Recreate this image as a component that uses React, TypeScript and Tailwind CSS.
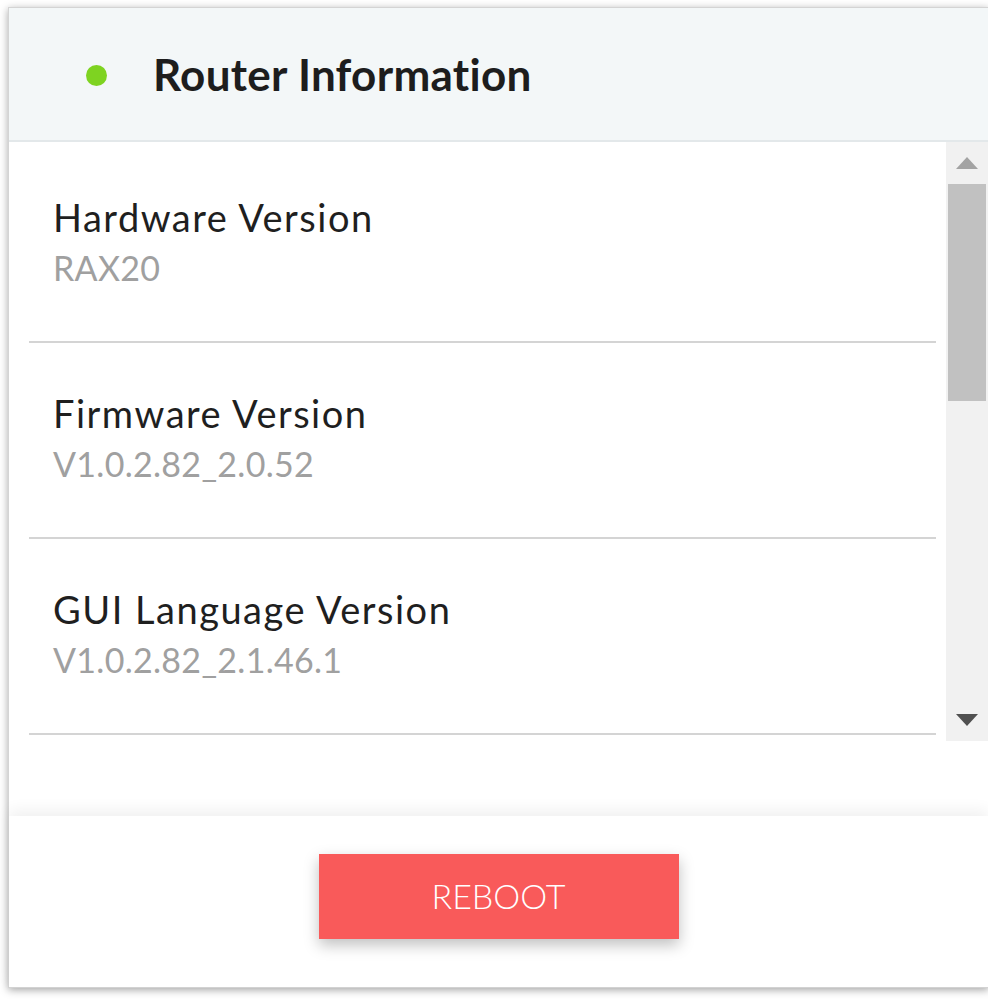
import React from 'react';

const items = [
  { label: 'Hardware Version', value: 'RAX20' },
  { label: 'Firmware Version', value: 'V1.0.2.82_2.0.52' },
  { label: 'GUI Language Version', value: 'V1.0.2.82_2.1.46.1' },
];

export default function App() {
  return (
    <div className="w-[988px] h-[999px] overflow-hidden bg-white pl-[8px] pt-[7px]" style={{ fontFamily: 'Lato, "Open Sans", sans-serif' }}>
      <div className="w-[981px] h-[981px] flex flex-col bg-white border border-[#d4d4d4] shadow-[0_2px_8px_rgba(0,0,0,0.35)]">
        {/* header */}
        <div className="h-[134px] shrink-0 flex items-center bg-[#f3f7f8] border-b-2 border-[#e3e8ea]">
          <span className="ml-[77px] mt-[2px] w-[21px] h-[21px] rounded-full bg-[#7ed321]" />
          <h1 className="ml-[46px] text-[44px] font-bold text-[#1d1d1d] tracking-[0.3px]">Router Information</h1>
        </div>

        {/* list with scrollbar */}
        <div className="h-[599px] shrink-0 flex">
          <div className="flex-1 overflow-hidden pt-[5px]">
            {items.map((it) => (
              <div key={it.label} className="ml-[20px] mr-[10px] border-b-2 border-[#d4d4d4] pl-[24px] pt-[48px] pb-[55px]">
                <div className="text-[38px] leading-[44px] tracking-[1.5px] text-[#1f1f1f]">{it.label}</div>
                <div className="mt-[11px] text-[34px] leading-[36px] tracking-[0.3px] text-[#a0a0a0]">{it.value}</div>
              </div>
            ))}
          </div>
          <div className="w-[42px] bg-[#f1f1f1] flex flex-col items-center">
            <div className="h-[42px] flex items-center justify-center">
              <svg width="22" height="12" viewBox="0 0 22 12"><polygon points="0,12 22,12 11,0" fill="#a3a3a3" /></svg>
            </div>
            <div className="w-[38px] h-[217px] bg-[#c1c1c1]" />
            <div className="flex-1" />
            <div className="h-[42px] flex items-center justify-center">
              <svg width="22" height="12" viewBox="0 0 22 12"><polygon points="0,0 22,0 11,12" fill="#505050" /></svg>
            </div>
          </div>
        </div>

        <div className="h-[75px] shrink-0 bg-white" />

        {/* footer */}
        <div className="flex-1 flex items-start justify-center pt-[38px] bg-white shadow-[0_-6px_14px_rgba(0,0,0,0.06)]">
          <button className="w-[360px] h-[85px] bg-[#f95a5a] text-white text-[34px] font-light leading-none pb-[2px] shadow-[0_6px_14px_rgba(0,0,0,0.25)]">
            REBOOT
          </button>
        </div>
      </div>
    </div>
  );
}
